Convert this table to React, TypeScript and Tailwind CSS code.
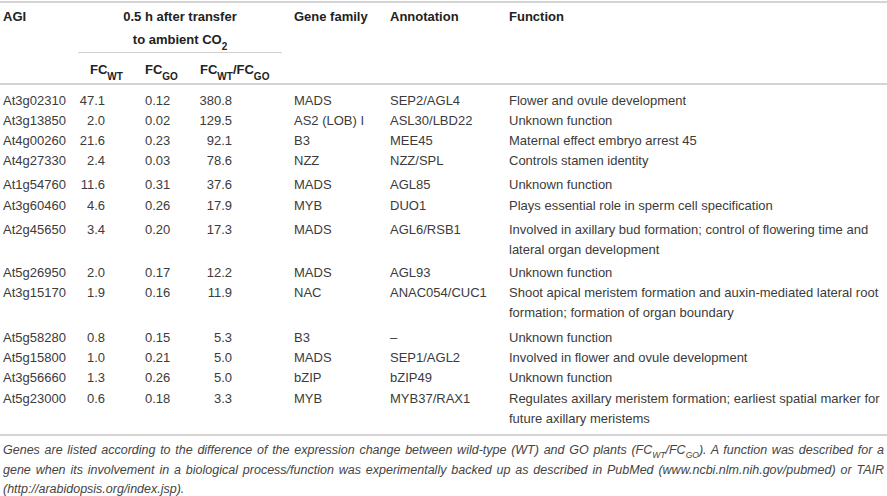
import React from "react";

type Row = {
  agi: string;
  wt: string;
  go: string;
  ratio: string;
  fam: string;
  ann: string;
  fn: string[];
  mt: string;
};

const rows: Row[] = [
  { agi: "At3g02310", wt: "47.1", go: "0.12", ratio: "380.8", fam: "MADS", ann: "SEP2/AGL4", fn: ["Flower and ovule development"], mt: "mt-0" },
  { agi: "At3g13850", wt: "2.0", go: "0.02", ratio: "129.5", fam: "AS2 (LOB) I", ann: "ASL30/LBD22", fn: ["Unknown function"], mt: "mt-0" },
  { agi: "At4g00260", wt: "21.6", go: "0.23", ratio: "92.1", fam: "B3", ann: "MEE45", fn: ["Maternal effect embryo arrest 45"], mt: "mt-0" },
  { agi: "At4g27330", wt: "2.4", go: "0.03", ratio: "78.6", fam: "NZZ", ann: "NZZ/SPL", fn: ["Controls stamen identity"], mt: "mt-0" },
  { agi: "At1g54760", wt: "11.6", go: "0.31", ratio: "37.6", fam: "MADS", ann: "AGL85", fn: ["Unknown function"], mt: "mt-[4px]" },
  { agi: "At3g60460", wt: "4.6", go: "0.26", ratio: "17.9", fam: "MYB", ann: "DUO1", fn: ["Plays essential role in sperm cell specification"], mt: "mt-[1px]" },
  { agi: "At2g45650", wt: "3.4", go: "0.20", ratio: "17.3", fam: "MADS", ann: "AGL6/RSB1", fn: ["Involved in axillary bud formation; control of flowering time and", "lateral organ development"], mt: "mt-[4px]" },
  { agi: "At5g26950", wt: "2.0", go: "0.17", ratio: "12.2", fam: "MADS", ann: "AGL93", fn: ["Unknown function"], mt: "mt-[3px]" },
  { agi: "At3g15170", wt: "1.9", go: "0.16", ratio: "11.9", fam: "NAC", ann: "ANAC054/CUC1", fn: ["Shoot apical meristem formation and auxin-mediated lateral root", "formation; formation of organ boundary"], mt: "mt-0" },
  { agi: "At5g58280", wt: "0.8", go: "0.15", ratio: "5.3", fam: "B3", ann: "–", fn: ["Unknown function"], mt: "mt-[5px]" },
  { agi: "At5g15800", wt: "1.0", go: "0.21", ratio: "5.0", fam: "MADS", ann: "SEP1/AGL2", fn: ["Involved in flower and ovule development"], mt: "mt-0" },
  { agi: "At3g56660", wt: "1.3", go: "0.26", ratio: "5.0", fam: "bZIP", ann: "bZIP49", fn: ["Unknown function"], mt: "mt-0" },
  { agi: "At5g23000", wt: "0.6", go: "0.18", ratio: "3.3", fam: "MYB", ann: "MYB37/RAX1", fn: ["Regulates axillary meristem formation; earliest spatial marker for", "future axillary meristems"], mt: "mt-[1px]" },
];

const cols = "grid grid-cols-[78px_67px_50px_87px_108px_119px_1fr]";

function FC({ sub }: { sub: string }) {
  return (
    <span>
      FC<sub className="text-[10px] align-[-3px] leading-none">{sub}</sub>
    </span>
  );
}

export default function App() {
  return (
    <div
      className="w-[887px] h-[496px] bg-white text-[#3b3b3b] overflow-hidden"
      style={{ fontFamily: '"Liberation Sans", Arial, sans-serif' }}
    >
      <div className="h-[2px] mt-[1px] bg-[#d4d4d4]" />
      {/* Header */}
      <div className={`${cols} font-bold text-[13px] text-[#222]`}>
        <div className="pl-[3px] pt-[4px] leading-[20px]">AGI</div>
        <div className="col-span-3 flex flex-col">
          <div className="text-center leading-[20px] pt-[4px]">0.5 h after transfer</div>
          <div className="text-center leading-[20px] pt-[3px]">
            to ambient CO<sub className="text-[10px] align-[-3px] leading-none">2</sub>
          </div>
          <div className="h-px bg-[#cfcfcf] mt-[2px]" />
          <div className="grid grid-cols-[67px_50px_87px] h-[30px] pt-[4px] items-center">
            <div className="pl-[12px]"><FC sub="WT" /></div>
            <div><FC sub="GO" /></div>
            <div className="pl-[5px]"><FC sub="WT" />/<FC sub="GO" /></div>
          </div>
        </div>
        <div className="pl-[12px] pt-[4px] leading-[20px]">Gene family</div>
        <div className="pt-[4px] leading-[20px]">Annotation</div>
        <div className="pt-[4px] leading-[20px]">Function</div>
      </div>
      <div className="h-[2px] bg-[#d4d4d4]" />
      {/* Body */}
      <div className="pt-[6px] text-[13px] leading-[20px]">
        {rows.map((r) => (
          <div key={r.agi} className={`${cols} ${r.mt}`}>
            <div className="pl-[3px]">{r.agi}</div>
            <div className="text-right pr-[40px]">{r.wt}</div>
            <div>{r.go}</div>
            <div className="text-right pr-[50px]">{r.ratio}</div>
            <div className="pl-[12px]">{r.fam}</div>
            <div>{r.ann}</div>
            <div>
              {r.fn.map((l) => (
                <div key={l} className="whitespace-nowrap">{l}</div>
              ))}
            </div>
          </div>
        ))}
      </div>
      <div className="h-[2px] mt-[5px] bg-[#d4d4d4]" />
      <div className="px-[3px] pt-[5px] text-[12.5px] leading-[19.5px] italic text-[#444]">
        <div className="text-justify [text-align-last:justify] whitespace-nowrap">
          Genes are listed according to the difference of the expression change between wild-type (WT) and GO plants (FC
          <sub className="text-[8.5px] align-[-2px] leading-none">WT</sub>/FC
          <sub className="text-[8.5px] align-[-2px] leading-none">GO</sub>). A function was described for a
        </div>
        <div className="text-justify [text-align-last:justify]">
          gene when its involvement in a biological process/function was experimentally backed up as described in PubMed (www.ncbi.nlm.nih.gov/pubmed) or TAIR
        </div>
        <div>(http://arabidopsis.org/index.jsp).</div>
      </div>
    </div>
  );
}
